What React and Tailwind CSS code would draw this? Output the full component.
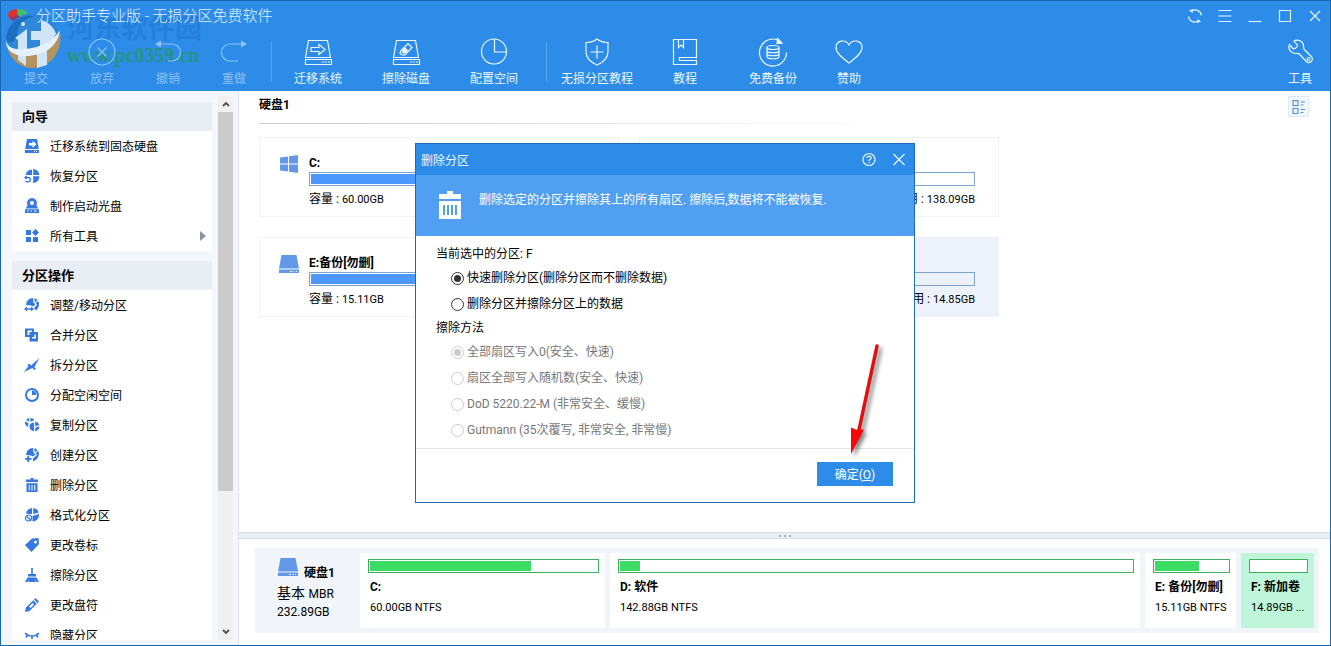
import React, { useState } from 'react';

const GLYPHS = {
  migrate: (
    <>
      <path d="M3 1h10l1.800 10H1.200z" />
      <path d="M1 12h14v3H1z" />
      <path d="M5 5h3.500V2.800L12.500 6.300 8.500 9.800V7.500H5z" fill="#fff" />
      <path d="M10 13h1v1h-1zM12 13h1v1h-1z" fill="#fff" />
    </>
  ),
  recover: (
    <>
      <path d="M8 1.500V7H1.800A6.500 6.500 0 0 1 8 1.500zM9.200 1a6.500 6.500 0 0 1 6.200 6H9.200zM9.200 8.200h6.200A6.500 6.500 0 0 1 9.200 15z" />
      <path d="M1 9.500h3.500M1.500 13c1.500 1.500 5 1 5-1.200S4 9 3 9.500M2.500 8 1 9.600l1.600 1.400" fill="none" stroke="currentColor" strokeWidth="1.300" />
    </>
  ),
  disc: (
    <>
      <path fillRule="evenodd" d="M8 0a5 5 0 0 1 4.300 7.500L14.500 10.500h-13l2.200-3A5 5 0 0 1 8 0zm0 3a2 2 0 1 0 0 4 2 2 0 0 0 0-4z" />
      <path fillRule="evenodd" d="M1 11.300h14V15H1zM3 12.500v1h1.500v-1zm3.500 0v1H8v-1zm3.500 0v1h2.500v-1z" />
    </>
  ),
  tools: <path d="M2 2h5v5H2zM2 9h5v5H2zM9 9h5v5H9zM11.500 1 15 4.500 11.500 8 8 4.500z" />,
  resize: (
    <>
      <path d="M2 8a7 7 0 0 1 7-7l.5 4.500 2 2L9 9.500 7 8.500zM10.200 1.200c1.500.3 2.500 1 3.300 2L11 5.500zM14.300 4c1.500 3.500.7 7-2.300 9.500l-2-2.500 3-3-1.300-2z" />
      <path d="M0 12 3 9.500v1.800h4V9.500l3 2.500-3 2.500v-1.700H3v1.700z" />
    </>
  ),
  merge: <path fillRule="evenodd" d="M1 1.500h9V5h4v9.500H5.500V10H1zm2.500 2V8h2V5H8V3.500zM8 7v4.500h4V7.500h-1.500V10H8z" />,
  split: <path d="M0 15 4.500 9l-1-1L5 6.500 7 8.500 15.500 1l-5.200 9.200 1.700 1.600-1.500 1.200-2-2z" />,
  clock: (
    <>
      <circle cx="8" cy="8" r="6" fill="none" stroke="currentColor" strokeWidth="2" />
      <path d="M8 3.500V8h4.500A4.500 4.500 0 0 0 8 3.500z" />
    </>
  ),
  copy: (
    <>
      <path d="M1 4.500 4.500 6 4 10C2 9 .5 7 1 4.500zM2 3.200A5 5 0 0 1 5 1l.5 3.500zM6.300 1c2 0 3.200.8 4 2L6.500 5z" />
      <path d="M10 5.500v8.800a4.800 4.800 0 0 1-4.500-5C5.600 7 7.500 5.500 10 5.500zM11.200 4.500a5 5 0 0 1 4 3.500l-4 1.500zM15.500 9.300c0 2.500-1.800 4.700-4.300 5v-3.500z" />
    </>
  ),
  create: (
    <>
      <path d="M2 8a7 7 0 0 1 7-7l.5 4.500 2 2L9 9.500 7 8.500zM10.200 1.200c1.500.3 2.500 1 3.300 2L11 5.500zM14.300 4c1.500 3.500.2 8.500-5.300 10.500v-3l4-3.500-1.300-2z" />
      <path d="M3.300 9h1.900v2h2.300v1.800H5.200V15H3.300v-2.200H1V11h2.300z" />
    </>
  ),
  trash: <path fillRule="evenodd" d="M6.500 1h3v1.500H14V5H2V2.500h4.500zM2.500 6.200h11V15h-11zM4.800 8v5.500h1V8zm2.700 0v5.500h1V8zm2.700 0v5.500h1V8z" />,
  format: (
    <>
      <path d="M2 6.500A7 7 0 0 1 8 1v6L5 7zM9.200 1a6.500 6.500 0 0 1 5.500 4.500L9.200 7zM15 7a6.500 6.500 0 0 1-6.500 7.500V9z" />
      <circle cx="4.500" cy="11" r="3" fill="none" stroke="currentColor" strokeWidth="1.200" />
      <path d="m2.500 9 4 4" stroke="currentColor" strokeWidth="1.200" />
    </>
  ),
  tag: <path fillRule="evenodd" d="M8 1.500 14.500 1 15 7l-7.500 8L1 8zm3.500 2a1.500 1.500 0 1 0 0 3 1.500 1.500 0 0 0 0-3z" />,
  broom: <path d="M7.200 1h1.600v6H12v2.500H4V7h3.200zM3.500 10.500h9L15 15h-2.500l-1-2v2h-7v-2l-1 2H1z" />,
  pen: <path fillRule="evenodd" d="M11.500 1 15 4.500 13.500 6 10 2.500zM9.300 3.200l3.500 3.500L5.500 14 1 15l1-4.500zM8.500 6 5 9.500 6.500 11 10 7.500z" />,
  hide: <path d="M1 6c4 4 10 4 14 0M3.500 8 2 10.500M8 9v3M12.500 8l1.500 2.500" fill="none" stroke="currentColor" strokeWidth="1.700" />,
};

const Glyph = ({ name, className }) => (
  <svg viewBox="0 0 16 16" fill="currentColor" aria-hidden="true" className={className}>
    {GLYPHS[name]}
  </svg>
);

const DriveIcon = () => (
  <svg viewBox="0 0 22 20" className="h-5 w-[22px] shrink-0 text-[#6398e8]" fill="currentColor" aria-hidden="true">
    <path d="M3.500 1h15L21 14.500H1zM1 15.500h20V19H1z" />
    <path d="M12 17h2v1h-2zM15.500 17h1v1h-1zM18 17h1v1h-1z" fill="#fff" />
  </svg>
);

const WindowsIcon = () => (
  <svg viewBox="0 0 22 20" className="h-5 w-[22px] shrink-0 text-[#6398e8]" fill="currentColor" aria-hidden="true">
    <path d="M2 3.500 10 2.500V9.500H2zM11 2.300 20 1v8.500h-9zM2 10.500h8v7l-8-1zM11 10.500h9V19l-9-1.300z" />
  </svg>
);

const TOOL_ICONS = {
  abandon: (
    <>
      <circle cx="15" cy="15" r="13" />
      <path d="m10.500 10.500 9 9M19.500 10.500l-9 9" />
    </>
  ),
  undo: (
    <>
      <path d="M7 7h12a8.500 8.500 0 0 1 0 17h-4" />
      <path d="M2 7l6-3.500v7z" fill="currentColor" stroke="none" />
    </>
  ),
  redo: (
    <>
      <path d="M23 7H11a8.500 8.500 0 0 0 0 17h8" />
      <path d="M28 7l-6-3.500v7z" fill="currentColor" stroke="none" />
    </>
  ),
  migrate: (
    <>
      <path d="M5.500 3.500h19l3 17h-25zM2.500 22.500h26v5h-26z" />
      <path d="M8 10.500h8V7.500l6 5-6 5v-3H8z" />
      <path d="M19 25h2M22 25h2M25 25h2" />
    </>
  ),
  erase: (
    <>
      <path d="M5.500 3.500h19l3 17h-25zM2.500 22.500h26v5h-26z" />
      <path d="m10 13.500 7-7 4 4-7 7.500h-3l-2-2z" />
      <path d="m12 13 2-2 2.500 2.500-2.500 2.500h-1.500l-1-1z" fill="currentColor" />
      <path d="M19 25h2M22 25h2M25 25h2" />
    </>
  ),
  allocate: (
    <>
      <circle cx="15" cy="14.500" r="12.500" />
      <path d="M15.500 2v13H28" />
    </>
  ),
  shield: (
    <>
      <path d="M15 2c3 2.500 7 3.500 11 3.500v9c0 6-4 10.500-11 13.500-7-3-11-7.500-11-13.500v-9C8 5.500 12 4.500 15 2z" />
      <path d="M15 8.500v13M8.500 15h13" />
    </>
  ),
  book: (
    <>
      <path d="M26.500 21.500v-19h-23v25h23v-4h-17v-3h17" />
      <path d="M8.500 2.500v8l2.500-2.500 2.500 2.500v-8" />
    </>
  ),
  backup: (
    <>
      <path d="M22 4a13.500 13.500 0 1 0 6.500 11.500" />
      <path d="M19.500 1.500 24 6l-5 .5z" fill="currentColor" />
      <ellipse cx="15" cy="10.500" rx="6" ry="2" />
      <path d="M9 10.500v9c0 3 12 3 12 0v-9M9 13.500c0 3 12 3 12 0M9 16.500c0 3 12 3 12 0" />
    </>
  ),
  heart: <path d="M15 26C8 20.500 2 16 2 10.500 2 3.500 11.500 1.500 15 8c3.500-6.500 13-4.500 13 2.500C28 16 22 20.500 15 26z" />,
  wrench: (
    <>
      <path d="M9 4c4-2 9 0 9.500 4.500.3 2-.1 3 .8 4l7 7a3.500 3.500 0 0 1-5 5l-7-7.500c-1-1-2-.5-4-.5C5.500 16 2.500 11.500 4.500 7.500L8 11.500c1 1 4-.5 4.500-3C12.500 7 9 5 9 4z" />
      <circle cx="23.500" cy="22" r="1.500" />
    </>
  ),
};

const ToolButton = ({ icon, label, className, disabled = false }) => (
  <button
    type="button"
    disabled={disabled}
    className={`flex flex-col items-center justify-end gap-1 text-xs leading-4 ${disabled ? 'text-[#8bc2f8]' : 'text-[#eaf6ff]'} ${className}`}
  >
    <svg viewBox="0 0 30 30" className="size-[30px]" fill="none" stroke="currentColor" strokeWidth="1.200" aria-hidden="true">
      {icon && TOOL_ICONS[icon]}
    </svg>
    {label}
  </button>
);

const ToolDivider = ({ className }) => <span className={`h-10 w-px bg-[#5aa7f0] ${className}`} />;

const WINDOW_CONTROLS = [
  ['刷新', (
    <g key="r">
      <path d="M4.500 3C9 .500 14 3 14.500 7.500M1.500 8.500C2 13 7 15.500 11.500 13" />
      <path d="M2 2.500 6 1l-.5 4zM14 13.500 10 15l.5-4z" fill="currentColor" stroke="none" />
    </g>
  )],
  ['菜单', <path key="m" d="M1.500 2.500h13M1.500 8h13M1.500 13.500h13" />],
  ['最小化', <path key="n" d="M1.500 13.500h13" />],
  ['最大化', <path key="x" d="M2.500 2.500h11v11h-11z" />],
  ['关闭', <path key="c" d="m3 3 10 10M13 3 3 13" />],
];

const Watermark = () => (
  <div className="pointer-events-none absolute top-2 left-0.5 flex items-start gap-1">
    <svg viewBox="0 0 60 60" className="size-[60px]" aria-hidden="true">
      <ellipse cx="14" cy="6" rx="9" ry="6" fill="#d8332f" />
      <path d="M14 0c8 0 12 3 11 8l-10 2z" fill="#3fc06a" />
      <path d="M7 9c4 5 10 4 13 0l-6-3z" fill="#8b3a6b" />
      <circle cx="30" cy="31" r="27" fill="#2f88da" />
      <path d="M7 18C14 8 24 5 32 7 20 10 14 17 14 27c-3 8-8 8-11 4 0-4 1-9 4-13z" fill="#1c6fc0" />
      <path d="M4 38c17 9 39 3 53-14 3 17-9 35-27 35C17 59 8 51 4 38z" fill="#b5935f" />
      <path d="M12 29 24 20v24H15V31zM38 11c8 2 14 9 15 14-6 11-15 15-26 17h10V31h-9v-9h10V11z" fill="#cfe4f6" />
      <path d="M15 43h8v14l-8-6zM34 43l10-5v18l-10 3z" fill="#cfe4f6" />
      <path d="M3 30c0 9 9 11 19 10 16-1 29-9 35-19-2 17-17 26-34 26C10 47 2 41 3 30z" fill="#e4f0fa" />
      <circle cx="20" cy="15" r="2" fill="#cfe4f6" />
    </svg>
    <div className="pt-1">
      <p className="text-[27px] leading-8 font-bold text-[#2580dc]">河东软件园</p>
      <p className="font-['Liberation_Serif',serif] text-xl leading-5 font-bold text-[#249680]">www.pc0359.cn</p>
    </div>
  </div>
);

const Header = () => (
  <header className="relative shrink-0 bg-[#2d8ce8]">
    <Watermark />
    <div className="relative flex h-[30px] items-center justify-between">
      <h1 className="pl-[35px] text-[15px] leading-5 font-light text-[#e2f1ff]">分区助手专业版 - 无损分区免费软件</h1>
      <div className="flex">
        {WINDOW_CONTROLS.map(([label, shape]) => (
          <button key={label} type="button" aria-label={label} className="flex w-[30px] justify-center text-[#e2f1ff]">
            <svg viewBox="0 0 16 16" className="size-4" fill="none" stroke="currentColor" strokeWidth="1.200">
              {shape}
            </svg>
          </button>
        ))}
      </div>
    </div>
    <nav className="relative flex h-[60px] items-center pt-px">
      <ToolButton label="提交" className="ml-0.5 w-[66px]" disabled />
      <ToolButton icon="abandon" label="放弃" className="w-[66px]" disabled />
      <ToolButton icon="undo" label="撤销" className="w-[66px]" disabled />
      <ToolButton icon="redo" label="重做" className="w-[66px]" disabled />
      <ToolDivider className="mr-0.5 ml-1" />
      <ToolButton icon="migrate" label="迁移系统" className="w-[88px]" />
      <ToolButton icon="erase" label="擦除磁盘" className="w-[88px]" />
      <ToolButton icon="allocate" label="配置空间" className="w-[88px]" />
      <ToolDivider className="mr-1.5 ml-2" />
      <ToolButton icon="shield" label="无损分区教程" className="w-[88px]" />
      <ToolButton icon="book" label="教程" className="w-[88px]" />
      <ToolButton icon="backup" label="免费备份" className="w-[88px]" />
      <ToolButton icon="heart" label="赞助" className="w-16" />
      <ToolButton icon="wrench" label="工具" className="ml-auto w-[60px]" />
    </nav>
  </header>
);

const MENU = [
  {
    title: '向导',
    items: [
      ['migrate', '迁移系统到固态硬盘'],
      ['recover', '恢复分区'],
      ['disc', '制作启动光盘'],
      ['tools', '所有工具'],
    ],
  },
  {
    title: '分区操作',
    items: [
      ['resize', '调整/移动分区'],
      ['merge', '合并分区'],
      ['split', '拆分分区'],
      ['clock', '分配空闲空间'],
      ['copy', '复制分区'],
      ['create', '创建分区'],
      ['trash', '删除分区'],
      ['format', '格式化分区'],
      ['tag', '更改卷标'],
      ['broom', '擦除分区'],
      ['pen', '更改盘符'],
      ['hide', '隐藏分区'],
    ],
  },
];

const Sidebar = () => (
  <aside className="flex w-[238px] shrink-0 gap-1.5 border-r border-[#d9e2ee] bg-[#f3f6fb] pr-[5px] pb-[5px] pl-[11px]">
    <div className="flex-1 space-y-2.5 overflow-hidden pt-[11px]">
      {MENU.map((group) => (
        <section key={group.title} className="bg-white">
          <h2 className="bg-[#e9edf4] pl-[10px] text-[13px] leading-[29px] font-bold">{group.title}</h2>
          <ul>
            {group.items.map(([icon, label]) => (
              <li key={label}>
                <button type="button" className="flex h-[30px] w-full items-center gap-2.5 px-3 text-xs">
                  <Glyph name={icon} className="size-4 text-[#3478e0]" />
                  <span className="pt-0.5">{label}</span>
                  {icon === 'tools' && (
                    <svg viewBox="0 0 6 10" className="-mr-1.5 ml-auto h-2.5 w-1.5" fill="#8a919c" aria-hidden="true">
                      <path d="m0 0 6 5-6 5z" />
                    </svg>
                  )}
                </button>
              </li>
            ))}
          </ul>
        </section>
      ))}
    </div>
    <div className="mt-[5px] flex w-[15px] flex-col bg-[#f0f0f0]">
      <button type="button" aria-label="向上滚动" className="flex h-4 items-center justify-center">
        <svg viewBox="0 0 8 6" className="h-1.5 w-2" fill="none" stroke="#505050" strokeWidth="1.800"><path d="m1 5 3-3 3 3" /></svg>
      </button>
      <div className="flex-1">
        <div className="h-[74%] bg-[#cbcbcb]" />
      </div>
      <button type="button" aria-label="向下滚动" className="flex h-4 items-center justify-center">
        <svg viewBox="0 0 8 6" className="h-1.5 w-2" fill="none" stroke="#505050" strokeWidth="1.800"><path d="m1 1 3 3 3-3" /></svg>
      </button>
    </div>
  </aside>
);

const VOLUMES = [
  { id: 'C', name: '', size: '60.00GB', free: '17.62GB', used: 71, fs: '60.00GB NTFS' },
  { id: 'D', name: '软件', size: '142.88GB', free: '138.09GB', used: 4, fs: '142.88GB NTFS' },
  { id: 'E', name: '备份[勿删]', size: '15.11GB', free: '5.92GB', used: 60, fs: '15.11GB NTFS' },
  { id: 'F', name: '新加卷', size: '14.89GB', free: '14.85GB', used: 0, fs: '14.89GB ...' },
];

const VolumeCard = ({ volume, selected }) => (
  <article className={`flex h-20 gap-2.5 border pt-4 pr-[23px] pl-[18px] ${selected ? 'border-[#edf2fa] bg-[#edf2fa]' : 'border-[#f0f2f5] bg-white'}`}>
    {volume.id === 'C' ? <WindowsIcon /> : <DriveIcon />}
    <div className="min-w-0 flex-1">
      <h3 className="-ml-px text-xs leading-[18px] font-bold">{volume.id}:{volume.name}</h3>
      <div className="-ml-px h-3.5 border border-[#7ba3d0] p-px">
        <div className="h-full bg-[#4d98fc]" style={{ width: `${volume.used}%` }} />
      </div>
      <div className="-ml-px mt-1 flex justify-between text-xs leading-[18px]">
        <span>容量 : <span className="text-[11px]">{volume.size}</span></span>
        <span>可用 : <span className="text-[11px]">{volume.free}</span></span>
      </div>
    </div>
  </article>
);

const DiskMap = () => (
  <section className="mt-[9px] mr-[11px] mb-3 ml-4 flex bg-[#f1f5fa] py-[5px] pr-[5px]">
    <div className="w-[105px] shrink-0 pt-1 pl-[22px]">
      <div className="flex items-end gap-[5px]">
        <DriveIcon />
        <b className="-mb-1.5 text-xs leading-5">硬盘1</b>
      </div>
      <p className="pt-1.5 text-sm leading-5">基本 <span className="text-xs">MBR</span></p>
      <p className="text-xs leading-[18px]">232.89GB</p>
    </div>
    <div className="grid min-w-0 flex-1 grid-cols-[245fr_530fr_91fr_73fr] gap-[5px]">
      {VOLUMES.map((v) => (
        <div
          key={v.id}
          className={`h-[75px] min-w-0 overflow-hidden pt-1.5 pr-1.5 pl-2 whitespace-nowrap ${v.id === 'F' ? 'bg-[#bff5da]' : 'bg-white'}`}
        >
          <div className="h-3.5 border border-[#3cae5c] bg-white p-px">
            <div className="h-full bg-[#3bdc63]" style={{ width: `${v.used}%` }} />
          </div>
          <h3 className="mt-[5px] pl-0.5 text-xs leading-[18px] font-bold">{v.id}: {v.name}</h3>
          <p className="mt-[3px] pl-0.5 text-[11px] leading-[18px]">{v.fs}</p>
        </div>
      ))}
    </div>
  </section>
);

const DELETE_MODES = ['快速删除分区(删除分区而不删除数据)', '删除分区并擦除分区上的数据'];
const WIPE_METHODS = ['全部扇区写入0(安全、快速)', '扇区全部写入随机数(安全、快速)', 'DoD 5220.22-M (非常安全、缓慢)', 'Gutmann (35次覆写, 非常安全, 非常慢)'];

const RadioRow = ({ name, label, checked, onChange, disabled = false }) => (
  <label className={`flex h-[26px] items-center gap-[3px] pl-[15px] ${disabled ? 'text-[#777]' : 'text-black'}`}>
    <input
      type="radio"
      name={name}
      checked={checked}
      onChange={onChange}
      disabled={disabled}
      className="size-[13px] appearance-none rounded-full border border-[#333] bg-white bg-clip-content p-0.5 checked:bg-[#333] disabled:border-[#ccc] disabled:checked:bg-[#ccc]"
    />
    {label}
  </label>
);

const DeleteDialog = () => {
  const [mode, setMode] = useState(0);

  return (
    <div className="fixed inset-0 flex items-center justify-center pr-px">
      <div role="dialog" aria-label="删除分区" className="relative w-[500px] border border-[#1b6cb5] bg-white text-xs">
        <div className="flex h-[31px] items-center bg-[#2d8ce8] pl-[5px] text-[#eaf6ff]">
          <h2 className="flex-1 pt-0.5">删除分区</h2>
          <button type="button" aria-label="帮助" className="flex w-[30px] justify-center">
            <svg viewBox="0 0 16 16" className="size-4" fill="none" stroke="currentColor" strokeWidth="1.200">
              <circle cx="8" cy="7.500" r="6" />
              <path d="M6 6c0-2.500 4-2.500 4 0C10 7.500 8 7.500 8 9M8 10v1.200" />
            </svg>
          </button>
          <button type="button" aria-label="关闭" className="flex w-[30px] justify-center">
            <svg viewBox="0 0 16 16" className="size-4" fill="none" stroke="currentColor" strokeWidth="1.200">
              <path d="m2.500 2 11 11M13.500 2l-11 11" />
            </svg>
          </button>
        </div>
        <div className="flex h-[61px] items-start bg-[#519ff3] pt-4 pl-[23px] text-white">
          <svg viewBox="0 0 22 28" className="h-7 w-[22px]" fill="currentColor" aria-hidden="true">
            <path fillRule="evenodd" d="M8 0h6v3h8v5H0V3h8zM0 10h22v18H0zM4 14v10h2V14zm4 0v10h2V14zm4 0v10h2V14zm4 0v10h2V14z" />
          </svg>
          <p className="pl-[18px] leading-[18px]">删除选定的分区并擦除其上的所有扇区. 擦除后,数据将不能被恢复.</p>
        </div>
        <div className="px-5 pt-[7px] pb-[5px]">
          <p className="leading-[22px]">当前选中的分区: F</p>
          {DELETE_MODES.map((label, i) => (
            <RadioRow key={label} name="mode" label={label} checked={mode === i} onChange={() => setMode(i)} />
          ))}
          <p className="leading-[22px]">擦除方法</p>
          {WIPE_METHODS.map((label, i) => (
            <RadioRow key={label} name="method" label={label} checked={i === 0} onChange={() => {}} disabled />
          ))}
        </div>
        <div className="flex h-[54px] items-start justify-end border-t border-[#e1e4e8] pt-[13px] pr-[21px]">
          <button type="button" className="h-6 w-[76px] bg-[#2d8ce8] pt-0.5 text-white">
            确定(<u>O</u>)
          </button>
        </div>
        {/* Pointer towards the confirm button */}
        <svg viewBox="0 0 40 120" className="pointer-events-none absolute right-6 bottom-10 h-[120px] w-10" aria-hidden="true">
          <g className="drop-shadow-[3px_3px_2px_rgba(0,0,0,0.5)]">
            <path d="M27 4 9 88" stroke="#e01010" strokeWidth="3.500" strokeLinecap="round" />
            <path d="M1 85.500 7 88l7-.5L1 112z" fill="#fb0404" />
          </g>
        </svg>
      </div>
    </div>
  );
};

export default function App() {
  return (
    <div className="flex h-screen flex-col overflow-hidden border border-[#1567ae] bg-white font-['Roboto','Noto_Sans_CJK_SC',sans-serif] text-black">
      <Header />
      <div className="flex min-h-0 flex-1">
        <Sidebar />
        <main className="flex min-w-0 flex-1 flex-col">
          <div className="flex-1 pl-5">
            <div className="flex items-start justify-between pt-[5px] pr-[21px]">
              <h2 className="pt-px text-xs leading-4 font-bold">硬盘1</h2>
              <button type="button" aria-label="切换视图" className="flex size-[21px] items-center justify-center border border-[#dfe9f6] bg-[#f2f7fd]">
                <svg viewBox="0 0 14 14" className="size-3.5" fill="none" stroke="#5c92da" strokeWidth="1.200" aria-hidden="true">
                  <path d="M1 .600h5v5H1zM1 8.500h5v5H1zM8.500 2H13M8.500 5h3M8.500 9.500H13M8.500 12.500h3" />
                </svg>
              </button>
            </div>
            <div className="mt-1.5 h-px w-3/5 bg-linear-to-r from-[#c8c8c8] to-transparent" />
            <div className="mt-[13px] grid max-w-[740px] grid-cols-2 gap-5">
              {VOLUMES.map((v) => (
                <VolumeCard key={v.id} volume={v} selected={v.id === 'F'} />
              ))}
            </div>
          </div>
          <div className="flex h-[7px] items-center justify-center gap-[3px] border-y border-[#d5dfea] bg-[#e9eff6]">
            <i className="size-0.5 bg-[#a8b2be]" />
            <i className="size-0.5 bg-[#a8b2be]" />
            <i className="size-0.5 bg-[#a8b2be]" />
          </div>
          <DiskMap />
        </main>
      </div>
      <DeleteDialog />
    </div>
  );
}
